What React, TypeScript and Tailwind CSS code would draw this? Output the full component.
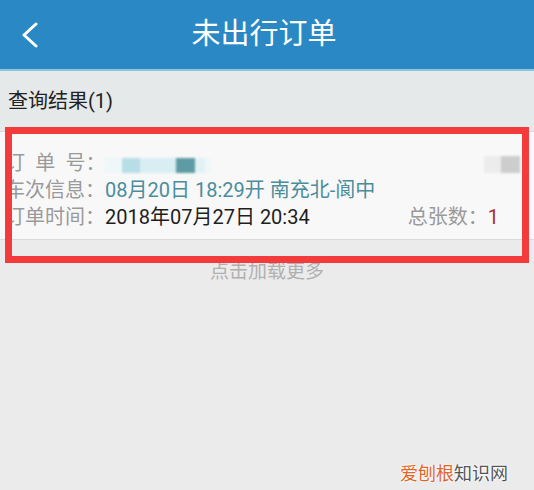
const font = "font-['Roboto','Noto_Sans_CJK_SC',sans-serif]";

function Row({ label, children }: { label: string; children: React.ReactNode }) {
  return (
    <div className="flex h-[27px] items-center">
      <span className="w-[100px] shrink-0 whitespace-pre text-[#9a9a9a]">{label}</span>
      {children}
    </div>
  );
}

export default function App() {
  return (
    <div className={`relative h-[490px] w-[534px] overflow-hidden bg-[#ebebeb] ${font}`}>
      <header className="flex h-[71px] items-center border-b-2 border-[#8ac3e3] bg-[#2a88c4]">
        <div className="w-[57px] pl-[21px]">
          <svg width="18" height="26" viewBox="0 0 18 26" fill="none">
            <path d="M15 2 L3 13 L15 24" stroke="#fff" strokeWidth="3" strokeLinecap="round" strokeLinejoin="round" />
          </svg>
        </div>
        <h1 className="flex-1 text-center text-[29px] leading-none text-white">未出行订单</h1>
        <div className="w-[63px]" />
      </header>

      <div className="flex h-[60px] items-center bg-[#e6e9ea] pl-[8px] text-[20px] text-[#222]">
        查询结果(1)
      </div>

      <div className="border-y border-[#dadada] bg-[#f8f8f8] pb-[9px] pl-[5px] pr-[14px] pt-[17px] text-[20px]">
        <Row label={"订\u2002单\u2002号："}>
          <div className="mt-[6px] flex h-[15px] w-[105px] bg-[#eef7f9] blur-[1px]">
            <div className="w-[17px]" />
            <div className="w-[18px] bg-[#b7dee7]" />
            <div className="w-[36px] bg-[#d9eef3]" />
            <div className="w-[19px] bg-[#5f9ba5]" />
            <div className="w-[10px] bg-[#e3f1f4]" />
          </div>
          <div className="flex-1" />
          <div className="mt-[4px] flex h-[17px] w-[36px] blur-[1px]">
            <div className="w-[17px] bg-[#ececec]" />
            <div className="w-[19px] bg-[#cdcdcd]" />
          </div>
        </Row>
        <Row label="车次信息：">
          <span className="text-[#4a8d9c]">08月20日 18:29开 南充北-阆中</span>
        </Row>
        <Row label="订单时间：">
          <span className="text-[#1e1e1e]">2018年07月27日 20:34</span>
          <div className="flex-1" />
          <span className="mr-[21px] text-[#9a9a9a]">
            总张数：<span className="text-[#a83232]">1</span>
          </span>
        </Row>
      </div>

      <div className="mt-[18px] text-center text-[19px] leading-[27px] text-[#b0b0b0]">点击加载更多</div>

      <div className="absolute left-[5px] top-[127px] h-[136px] w-[524px] border-[7px] border-[#f43b3b]" />

      <div className="absolute left-[400px] top-[460px] text-[18px] [text-shadow:0_0_2px_#fff,0_0_2px_#fff,0_0_3px_#fff]">
        <span className="text-[#e0662a]">爱刨根</span>
        <span className="text-[#555]">知识网</span>
      </div>
    </div>
  );
}
